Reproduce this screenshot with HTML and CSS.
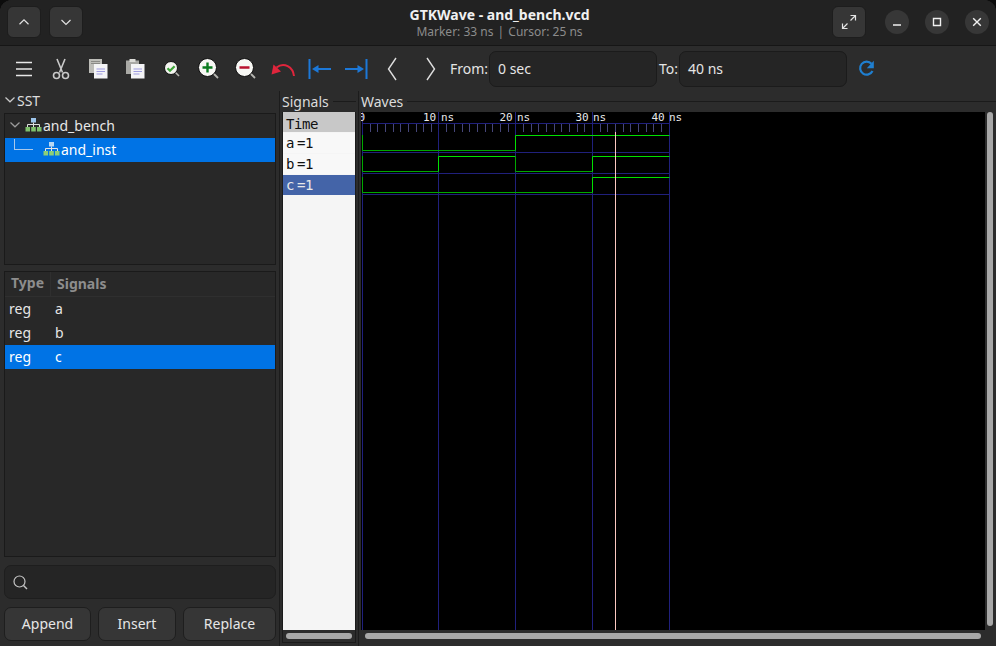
FILE: index.html
```html
<!DOCTYPE html>
<html lang="en">
<head>
<meta charset="utf-8">
<title>GTKWave - and_bench.vcd</title>
<link rel="stylesheet" href="styles.css">
</head>
<body>
<div class="window">
  <header class="titlebar">
    <div class="tb-group">
      <button class="hbtn"><svg width="14" height="14" viewBox="0 0 14 14"><path d="M2.5 9.2 7 4.8l4.5 4.4" class="ln"/></svg></button>
      <button class="hbtn"><svg width="14" height="14" viewBox="0 0 14 14"><path d="M2.5 5 7 9.4 11.5 5" class="ln"/></svg></button>
    </div>
    <div class="title-block">
      <div class="title">GTKWave - and_bench.vcd</div>
      <div class="subtitle">Marker: 33 ns <span class="pipe">|</span> Cursor: 25 ns</div>
    </div>
    <div class="tb-group right">
      <button class="hbtn expand"><svg width="16" height="16" viewBox="0 0 16 16"><path d="M9.5 1.5h5v5M14.5 1.5 9.5 6.5M6.5 14.5h-5v-5M1.5 14.5l5-5" class="ln"/></svg></button>
      <button class="wbtn"><svg width="10" height="10" viewBox="0 0 10 10"><path d="M1 8h8" class="ln2"/></svg></button>
      <button class="wbtn"><svg width="10" height="10" viewBox="0 0 10 10"><path d="M1.5 1.5h7v7h-7z" class="ln2"/></svg></button>
      <button class="wbtn"><svg width="10" height="10" viewBox="0 0 10 10"><path d="M1.2 1.2l7.6 7.6M8.8 1.2 1.2 8.8" class="ln2"/></svg></button>
    </div>
  </header>

  <div class="toolbar">
    <span class="tool"><svg width="18" height="16" viewBox="0 0 18 16"><path d="M1 1.5h16M1 8h16M1 14.5h16" class="ln3"/></svg></span>
    <span class="tool"><svg width="20" height="22" viewBox="0 0 20 22"><path d="M6 1 11.500 14.500M14 1 8.500 14.500" fill="none" stroke="#c9c9c9" stroke-width="1.600"/><circle cx="5.500" cy="17.500" r="3" fill="none" stroke="#c9c9c9" stroke-width="1.600"/><circle cx="14.500" cy="17.500" r="3" fill="none" stroke="#c9c9c9" stroke-width="1.600"/></svg></span>
    <span class="tool"><svg width="20" height="21" viewBox="0 0 20 21"><path d="M1 1h13v14H1z" fill="#bdbdb8"/><path d="M3 3.500h9M3 5.500h9" stroke="#8a8a86"/><path d="M6 6h13.500v14.500H6z" fill="#f4f4f6"/><path d="M8.500 11h8.500M8.500 13.500h8.500M8.500 16h6" stroke="#9d9be0"/></svg></span>
    <span class="tool"><svg width="20" height="21" viewBox="0 0 20 21"><path d="M1 2.500h13V16H1z" fill="#a9a9a5"/><path d="M4.500 1h6v3h-6z" fill="#dcdcd8"/><path d="M6 6h13.500v14.500H6z" fill="#f4f4f6"/><path d="M8.500 11h8.500M8.500 13.500h8.500M8.500 16h6" stroke="#9d9be0"/></svg></span>
    <span class="tool"><svg width="16" height="16" viewBox="0 0 16 16"><path d="M10.500 10.500l4.500 4.500" stroke="#b5b5b0" stroke-width="1.600"/><circle cx="7" cy="7" r="6.500" fill="#f4f4f0" stroke="#111" stroke-width="1"/><path d="M3.500 7.200l2.500 2.600 4.600-4.600" fill="none" stroke="#3fa53a" stroke-width="2.200"/></svg></span>
    <span class="tool"><svg width="22" height="22" viewBox="0 0 22 22"><path d="M14.500 14.500l5.500 5.500" stroke="#b5b5b0" stroke-width="1.800"/><circle cx="9.500" cy="9.500" r="9" fill="#f7f7f4" stroke="#111"/><path d="M4.500 9.500h10M9.500 4.500v10" stroke="#0a7a1e" stroke-width="2.400"/></svg></span>
    <span class="tool"><svg width="22" height="22" viewBox="0 0 22 22"><path d="M14.500 14.500l5.500 5.500" stroke="#b5b5b0" stroke-width="1.800"/><circle cx="9.500" cy="9.500" r="9" fill="#f7f7f4" stroke="#111"/><path d="M4.500 9.500h10" stroke="#b8102e" stroke-width="2.400"/></svg></span>
    <span class="tool"><svg width="24" height="16" viewBox="0 0 24 16"><path d="M23 15C22 6 13 .500 5.500 6.500" fill="none" stroke="#e0253c" stroke-width="2"/><path d="M.5 13.500 2.500 3.500l7.500 7z" fill="#e0253c"/></svg></span>
    <span class="tool"><svg width="23" height="20" viewBox="0 0 23 20"><path d="M1.500 0v20" stroke="#1c78d8" stroke-width="2"/><path d="M9 10h14" stroke="#1c78d8" stroke-width="2"/><path d="M4 10l6.500-4v8z" fill="#1c78d8"/></svg></span>
    <span class="tool"><svg width="23" height="20" viewBox="0 0 23 20"><path d="M21.500 0v20" stroke="#1c78d8" stroke-width="2"/><path d="M0 10h14" stroke="#1c78d8" stroke-width="2"/><path d="M19 10l-6.500-4v8z" fill="#1c78d8"/></svg></span>
    <span class="tool prev"><svg width="10" height="24" viewBox="0 0 10 24"><path d="M9 1 1.500 12 9 23" fill="none" stroke="#dedede" stroke-width="1.400"/></svg></span>
    <span class="tool"><svg width="10" height="24" viewBox="0 0 10 24"><path d="M1 1l7.500 11L1 23" fill="none" stroke="#dedede" stroke-width="1.400"/></svg></span>
    <label class="tlabel from">From:</label>
    <div class="tinput">0 sec</div>
    <label class="tlabel to">To:</label>
    <div class="tinput">40 ns</div>
    <span class="tool refresh"><svg width="17" height="17" viewBox="0 0 17 17"><path d="M13.500 3.800A6.500 6.500 0 1 0 14.500 11" fill="none" stroke="#1f7fd0" stroke-width="2.200"/><path d="M15.800 .8v7.400H8.800z" fill="#1f7fd0"/></svg></span>
  </div>

  <main class="body">
    <aside class="sidebar">
      <div class="sst"><svg width="10" height="6" viewBox="0 0 10 6"><path d="M.5.500 5 4.800 9.500.500" class="ln4"/></svg><span>SST</span></div>
      <div class="box tree">
        <div class="row"><svg class="chev" width="10" height="6" viewBox="0 0 10 6"><path d="M.5.500 5 4.800 9.500.500" class="ln5"/></svg>
          <svg class="hier" width="17" height="14" viewBox="0 0 17 14"><path d="M6 0h5v4.500H6z" fill="#9cc4ea"/><path d="M8.500 4.500V9M2.500 9V6.500h12V9" fill="none" stroke="#dedede"/><path d="M.5 9h4.500v4.500H.5zM6.200 9h4.600v4.500H6.200zM12 9h4.500v4.500H12z" fill="#7fc06c"/></svg><span>and_bench</span></div>
        <div class="row sel second"><span class="elbow"></span>
          <svg class="hier" width="17" height="14" viewBox="0 0 17 14"><path d="M6 0h5v4.500H6z" fill="#b6d8f4"/><path d="M8.500 4.500V9M2.500 9V6.500h12V9" fill="none" stroke="#e6e6e6"/><path d="M.5 9h4.500v4.500H.5zM6.200 9h4.600v4.500H6.200zM12 9h4.500v4.500H12z" fill="#8ccf78"/></svg><span>and_inst</span></div>
      </div>
      <div class="box list">
        <div class="lhead"><span class="c1">Type</span><span class="c2">Signals</span></div>
        <div class="lrow"><span class="c1">reg</span><span>a</span></div>
        <div class="lrow"><span class="c1">reg</span><span>b</span></div>
        <div class="lrow sel"><span class="c1">reg</span><span>c</span></div>
      </div>
      <div class="search"><svg width="15" height="15" viewBox="0 0 15 15"><circle cx="6.500" cy="6.500" r="5.500" fill="none" stroke="#c4c4c4" stroke-width="1.200"/><path d="M10.500 10.500l3.500 3.500" stroke="#c4c4c4" stroke-width="1.400"/></svg></div>
      <div class="actions">
        <button class="act a1">Append</button>
        <button class="act a2">Insert</button>
        <button class="act a3">Replace</button>
      </div>
    </aside>

    <section class="signals">
      <div class="legend"><span>Signals</span><i></i></div>
      <div class="sigframe">
        <div class="siglist">
          <div class="sig time">Time</div>
          <div class="sig">a =1</div>
          <div class="sig">b =1</div>
          <div class="sig on">c =1</div>
        </div>
        <div class="hscroll"><b></b></div>
      </div>
    </section>

    <section class="waves">
      <div class="legend"><span>Waves</span><i></i></div>
      <div class="waveframe">
        <div class="wavecol">
          <svg class="canvas" width="624" height="518" viewBox="361 112 624 518">
            <rect x="361" y="112" width="624" height="518" fill="#000"/>
            <g stroke="#20207c" fill="none">
              <path d="M362.500 112v518M438.500 112v518M515.500 112v518M592.500 112v518M669.500 112v518"/>
              <path d="M362 123.500h307.500M362 152.500h307.500M362 173.500h307.500M362 194.500h307.500"/>
            </g>
            <path stroke="#46467a" fill="none" d="M370.500 124v8M377.500 124v8M385.500 124v8M393.500 124v8M400.500 124v8M408.500 124v8M416.500 124v8M423.500 124v8M431.500 124v8M446.500 124v8M454.500 124v8M462.500 124v8M469.500 124v8M477.500 124v8M485.500 124v8M492.500 124v8M500.500 124v8M508.500 124v8M523.500 124v8M531.500 124v8M538.500 124v8M546.500 124v8M554.500 124v8M561.500 124v8M569.500 124v8M577.500 124v8M584.500 124v8M600.500 124v8M607.500 124v8M615.500 124v8M623.500 124v8M630.500 124v8M638.500 124v8M646.500 124v8M653.500 124v8M661.500 124v8"/>
            <g class="ruler">
              <text x="358.500" y="121">0</text>
              <text x="423" y="121">10</text><text x="441" y="121">ns</text>
              <text x="499.500" y="121">20</text><text x="517" y="121">ns</text>
              <text x="575.500" y="121">30</text><text x="593" y="121">ns</text>
              <text x="651.500" y="121">40</text><text x="669" y="121">ns</text>
            </g>
            <g fill="none">
              <path d="M362.500 135v15.500H515.500" stroke="#00a800"/>
              <path d="M515.500 150.500V135.500H669.500" stroke="#00e000"/>
              <path d="M362.500 156v15.500H438.500" stroke="#00a800"/>
              <path d="M438.500 171.500V156.500H515.500" stroke="#00e000"/>
              <path d="M515.500 156.500v15H592.500" stroke="#00a800"/>
              <path d="M592.500 171.500V156.500H669.500" stroke="#00e000"/>
              <path d="M362.500 177v15.500H592.500" stroke="#00a800"/>
              <path d="M592.500 192.500V177.500H669.500" stroke="#00e000"/>
            </g>
            <path d="M615.500 132v498" stroke="#fbc8c0"/>
          </svg>
          <div class="hscroll wide"><b></b></div>
        </div>
        <div class="vscroll"><b></b></div>
      </div>
    </section>
  </main>
</div>
</body>
</html>
```
FILE: styles.css
```css
* { box-sizing: border-box; }
html, body { margin: 0; padding: 0; }
html { background: #0c0c0c; }
body { width: 996px; height: 646px; overflow: hidden; color: #e6e6e6; font-family: "Noto Sans", sans-serif; font-size: 14px; }
.window { width: 996px; height: 646px; display: flex; flex-direction: column; background: #2c2c2c; border-radius: 12px 12px 0 0; overflow: hidden; }
button { font: inherit; color: inherit; padding: 0; }
.ln { fill: none; stroke: #e2e2e2; stroke-width: 1.2; }
.ln2 { fill: none; stroke: #f0f0f0; stroke-width: 1.4; }
.ln3 { fill: none; stroke: #e8e8e8; stroke-width: 1.5; }
.ln4 { fill: none; stroke: #c8c8c8; stroke-width: 1.2; }
.ln5 { fill: none; stroke: #9a9a9a; stroke-width: 1.2; }

.titlebar { height: 46px; flex: none; background: #222; border-bottom: 1px solid #161616; display: flex; align-items: center; justify-content: space-between; padding: 0 7px 1px; position: relative; }
.tb-group { display: flex; align-items: center; gap: 8px; }
.tb-group.right { gap: 16px; }
.hbtn { width: 34px; height: 32px; background: #363636; border: 1px solid #1d1d1d; border-radius: 6px; display: flex; align-items: center; justify-content: center; }
.hbtn.expand { margin-right: 3px; }
.wbtn { width: 24px; height: 24px; border: 0; border-radius: 50%; background: #373737; display: flex; align-items: center; justify-content: center; }
.title-block { position: absolute; left: 3px; right: 0; top: 5px; text-align: center; pointer-events: none; }
.title { font-size: 14px; font-weight: 700; line-height: 19px; color: #f0f0f0; }
.subtitle { font-size: 12px; line-height: 16px; color: #8c8c8c; }
.pipe { margin: 0 1px; }

.toolbar { height: 45px; flex: none; display: flex; align-items: center; padding: 0 0 0 5px; }
.tool { width: 37px; flex: none; display: flex; align-items: center; justify-content: center; }
.tool.prev { padding-right: 3px; }
.tlabel { color: #e4e4e4; }
.from { margin-left: 1px; width: 39px; }
.to { width: 20px; margin-left: 2px; }
.tinput { width: 168px; height: 36px; background: #252525; border: 1px solid #1b1b1b; border-radius: 7px; padding-left: 8px; line-height: 34px; color: #e6e6e6; }
.refresh { margin-left: 1px; }

.body { flex: 1; min-height: 0; display: flex; }
.sidebar { width: 280px; flex: none; border-right: 1px solid #1c1c1c; padding: 0 3px 5px 4px; display: flex; flex-direction: column; }
.sst { height: 22px; display: flex; align-items: center; gap: 2px; padding: 0 0 4px 1px; color: #dedede; }
.box { border: 1px solid #1a1a1a; background: #282828; }
.tree { height: 152px; flex: none; }
.row { height: 24px; display: flex; align-items: center; padding: 0 0 2px 5px; position: relative; }
.chev { margin-right: 5px; }
.hier { margin-right: 1px; flex: none; }
.row.second { padding-left: 38px; }
.elbow { position: absolute; left: 9px; top: 1px; width: 19px; height: 11px; border-left: 1px solid #a9c8ea; border-bottom: 1px solid #a9c8ea; }
.sel { background: #0073e5; color: #fff; }
.list { flex: 1; min-height: 0; margin-top: 6px; }
.lhead { height: 25px; display: flex; align-items: center; color: #8d8d8d; font-weight: 700; border-bottom: 1px solid #2f2f2f; }
.lhead .c1 { padding: 0 0 2px 6px; width: 46px; border-right: 1px solid #2f2f2f; line-height: 22px; }
.lhead .c2 { padding: 0 0 2px 6px; }
.lrow { height: 24px; display: flex; align-items: center; padding-bottom: 2px; }
.lrow .c1 { padding-left: 4px; width: 50px; }
.search { height: 34px; flex: none; margin-top: 8px; background: #252525; border: 1px solid #1e1e1e; border-radius: 7px; display: flex; align-items: center; padding-left: 8px; }
.actions { display: flex; gap: 7px; margin-top: 8px; flex: none; }
.act { height: 34px; background: #363636; border: 1px solid #1e1e1e; border-radius: 7px; color: #e6e6e6; padding-bottom: 2px; }
.a1 { width: 87px; }
.a2 { width: 78px; }
.a3 { width: 93px; }

.legend { height: 21px; flex: none; display: flex; align-items: center; color: #dcdcdc; }
.legend i { flex: 1; height: 1px; background: #1b1b1b; margin-left: 4px; }

.signals { width: 79px; flex: none; border-right: 1px solid #1c1c1c; padding: 0 2px 3px; display: flex; flex-direction: column; }
.sigframe { flex: 1; min-height: 0; border: 1px solid #1b1b1b; border-top: 0; display: flex; flex-direction: column; }
.siglist { height: 518px; flex: none; background: #f5f5f5; font-family: "DejaVu Sans Mono", monospace; font-size: 14px; letter-spacing: -.4px; word-spacing: -5px; color: #111; }
.sig { height: 20px; line-height: 20px; margin-bottom: 1px; padding-left: 3px; background: #f8f8f8; }
.sig.time { background: #c8c8c8; line-height: 24px; }
.sig.on { background: #4464a8; color: #e8e8e8; }
.hscroll { height: 12px; flex: none; padding: 3px 3px 0; }
.hscroll b { display: block; height: 6px; border-radius: 3px; background: #a8a8a8; }
.hscroll.wide { padding: 3px 4px 0 4px; }

.waves { flex: 1; min-width: 0; display: flex; flex-direction: column; padding: 0 0 3px 2px; }
.waveframe { flex: 1; min-height: 0; display: flex; }
.wavecol { width: 624px; flex: none; display: flex; flex-direction: column; }
.canvas { display: block; flex: none; }
.ruler { font-family: "DejaVu Sans Mono", monospace; font-size: 11px; fill: #e8e8e8; }
.vscroll { margin-left: 2px; width: 6px; height: 514px; }
.vscroll b { display: block; height: 100%; border-radius: 3px; background: #a8a8a8; }
```
